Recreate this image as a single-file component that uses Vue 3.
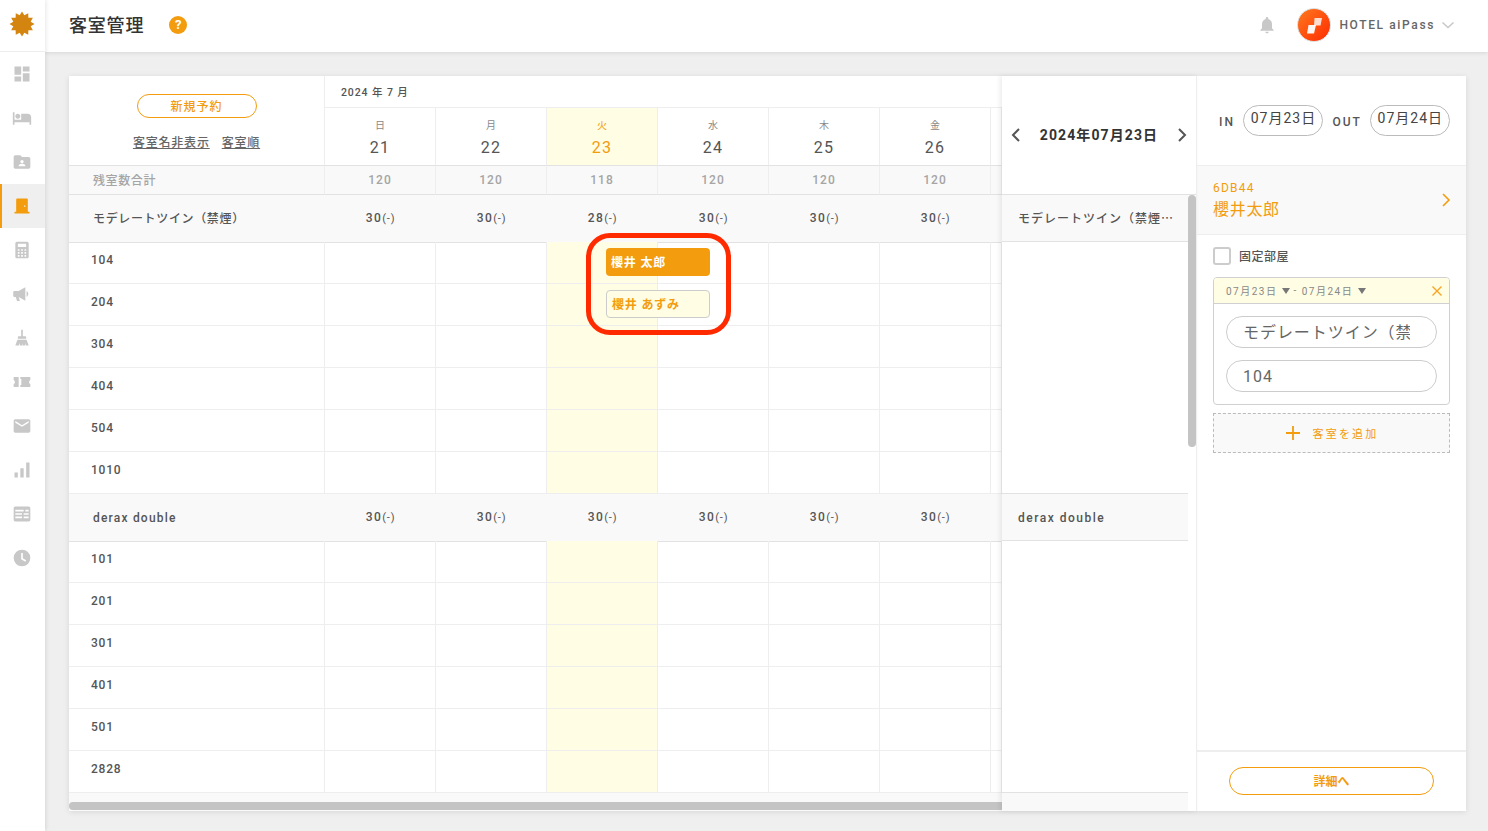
<script setup>
const days = [
  { w: '日', d: 21, rest: 120, a: 30, b: 30 },
  { w: '月', d: 22, rest: 120, a: 30, b: 30 },
  { w: '火', d: 23, rest: 118, a: 28, b: 30, today: true },
  { w: '水', d: 24, rest: 120, a: 30, b: 30 },
  { w: '木', d: 25, rest: 120, a: 30, b: 30 },
  { w: '金', d: 26, rest: 120, a: 30, b: 30 },
]
const groupA = ['104', '204', '304', '404', '504', '1010']
const groupB = ['101', '201', '301', '401', '501', '2828']

const star = (() => {
  const pts = []
  const n = 12
  for (let i = 0; i < n * 2; i++) {
    const r = i % 2 ? 9 : 12.5
    const a = (Math.PI * i) / n - Math.PI / 2
    pts.push(`${(13 + r * Math.cos(a)).toFixed(2)},${(13 + r * Math.sin(a)).toFixed(2)}`)
  }
  return pts.join(' ')
})()

const nav = [
  { key: 'dash' }, { key: 'bed' }, { key: 'folder' }, { key: 'door', active: true },
  { key: 'calc' }, { key: 'mega' }, { key: 'broom' }, { key: 'ticket' },
  { key: 'mail' }, { key: 'bars' }, { key: 'news' }, { key: 'clock' },
]
</script>

<template>
  <div class="app">
    <aside class="side">
      <div class="logo">
        <svg width="26" height="26" viewBox="0 0 26 26"><polygon :points="star" fill="#d4850f" /></svg>
      </div>
      <div v-for="n in nav" :key="n.key" class="nav" :class="{ active: n.active }">
        <svg width="20" height="20" viewBox="0 0 24 24" :fill="n.active ? '#f29c0e' : '#c8c8c8'">
          <path v-if="n.key === 'dash'" d="M3 13h8V3H3v10zm0 8h8v-6H3v6zm10 0h8V11h-8v10zm0-18v6h8V3h-8z" />
          <path v-else-if="n.key === 'bed'" d="M7 13c1.660 0 3-1.340 3-3S8.660 7 7 7s-3 1.340-3 3 1.340 3 3 3zm12-6h-8v7H3V5H1v15h2v-3h18v3h2v-9c0-2.210-1.790-4-4-4z" />
          <template v-else-if="n.key === 'folder'">
            <path d="M20 6h-8l-2-2H4c-1.100 0-1.990.9-1.990 2L2 18c0 1.100.9 2 2 2h16c1.100 0 2-.9 2-2V8c0-1.100-.9-2-2-2z" />
            <circle cx="12" cy="11.500" r="2" fill="#fff" />
            <path d="M8 17v-.8c0-1.300 2.700-2 4-2s4 .7 4 2v.8z" fill="#fff" />
          </template>
          <path v-else-if="n.key === 'door'" fill-rule="evenodd" d="M19 19V4.500c0-.8-.7-1.500-1.500-1.500h-11C5.700 3 5 3.700 5 4.500V19H3v2h18v-2h-2zM16 13h-1.500v-1.500H16z" />
          <path v-else-if="n.key === 'calc'" fill-rule="evenodd" d="M6 2h12c1.100 0 2 .9 2 2v16c0 1.100-.9 2-2 2H6c-1.100 0-2-.9-2-2V4c0-1.100.9-2 2-2zm1 2.500v4h10v-4zM7 11v2h2v-2zm4 0v2h2v-2zm4 0v2h2v-2zm-8 3.500v2h2v-2zm4 0v2h2v-2zm4 0v2h2v-2zM7 18v2h2v-2zm4 0v2h2v-2zm4 0v2h2v-2z" />
          <path v-else-if="n.key === 'mega'" d="M1.500 9.500c0-.5.5-1 1-1H8L16 4v16l-8-4.500 1.500 5H6l-1.500-5h-2c-.5 0-1-.5-1-1zM17.500 8.500c1.500 1 2 2.200 2 3.500s-.5 2.500-2 3.500z" />
          <path v-else-if="n.key === 'broom'" d="M11 2h2v8h3c.6 0 1 .4 1 1v2H7v-2c0-.6.4-1 1-1h3zM6.500 14h11L20 21h-3.500l-.7-3-.3 3h-2.700l-.3-3-.3 3H9.500L9 18l-.7 3H4z" />
          <path v-else-if="n.key === 'ticket'" d="M2 6h6v12H2v-3.500c1-.5 1.500-1.500 1.500-2.500S3 10 2 9.500zM10 6h12v3.500c-1 .5-1.500 1.500-1.500 2.500s.5 2 1.500 2.500V18H10v-2.500h1.200v-7H10z" />
          <path v-else-if="n.key === 'mail'" d="M20 4H4c-1.100 0-1.990.9-1.990 2L2 18c0 1.100.9 2 2 2h16c1.100 0 2-.9 2-2V6c0-1.100-.9-2-2-2zm0 4l-8 5-8-5V6l8 5 8-5v2z" />
          <path v-else-if="n.key === 'bars'" d="M3 15h4v6H3zm7-5h4v11h-4zm7-7h4v18h-4z" />
          <path v-else-if="n.key === 'news'" fill-rule="evenodd" d="M4 3h16c1.100 0 2 .9 2 2v14c0 1.100-.9 2-2 2H4c-1.100 0-2-.9-2-2V5c0-1.100.9-2 2-2zm0 4v2h10V7zm0 4v2h8v-2zm10 0v2h6v-2zm-10 4v2h8v-2zm10 0v2h6v-2zm2-8v2h4V7z" />
          <path v-else-if="n.key === 'clock'" d="M12 2a10 10 0 1 0 0 20 10 10 0 0 0 0-20zm4 14.500-5-3V6h2v6.400l4 2.400z" />
        </svg>
      </div>
    </aside>

    <div class="main">
      <header class="top">
        <h1 class="title">客室管理</h1>
        <span class="help">?</span>
        <div class="top-right">
          <svg class="bell" width="20" height="20" viewBox="0 0 24 24" fill="#c8c8c8"><path d="M12 22c1.100 0 2-.9 2-2h-4c0 1.100.9 2 2 2zm6-6v-5c0-3.100-1.600-5.600-4.500-6.300V4c0-.8-.7-1.500-1.500-1.500s-1.500.7-1.500 1.500v.7C7.600 5.400 6 7.900 6 11v5l-2 2v1h16v-1l-2-2z" /></svg>
          <div class="avatar">
            <svg width="20" height="20" viewBox="0 0 20 20" fill="#fff">
              <path d="M10.500 3h7.500L16.500 10.500H10z" opacity=".8" />
              <path d="M4.500 10h7.500L10 18.500H3z" opacity=".95" />
            </svg>
          </div>
          <span class="hotel">HOTEL aiPass</span>
          <svg width="14" height="14" viewBox="0 0 14 14" fill="none" stroke="#c8c8c8" stroke-width="1.500"><path d="M1.500 4.500 7 9.500l5.500-5" /></svg>
        </div>
      </header>

      <div class="content">
        <div class="card">
          <section class="cal">
            <div class="head grid">
              <div class="corner">
                <button class="btn-new">新規予約</button>
                <div class="links"><a>客室名非表示</a><a>客室順</a></div>
              </div>
              <div class="month">2024 年 7 月</div>
              <div v-for="d in days" :key="d.d" class="dayhead" :class="{ today: d.today }">
                <span class="wd">{{ d.w }}</span>
                <span class="dn">{{ d.d }}</span>
              </div>
              <div class="dayhead"></div>
            </div>

            <div class="grid rest">
              <div class="rest-l">残室数合計</div>
              <div v-for="d in days" :key="d.d" class="rest-c">{{ d.rest }}</div>
              <div class="rest-c"></div>
            </div>

            <div class="grid type">
              <div class="type-l jp">モデレートツイン（禁煙）</div>
              <div v-for="d in days" :key="d.d" class="type-c">{{ d.a }}<small>(-)</small></div>
              <div class="type-c"></div>
            </div>
            <div v-for="(r, i) in groupA" :key="r" class="grid room">
              <div class="room-l">{{ r }}</div>
              <div v-for="d in days" :key="d.d" class="cell" :class="{ today: d.today }">
                <template v-if="d.today && i === 0">
                  <div class="book solid">櫻井 太郎</div>
                  <div class="book pale">櫻井 あずみ</div>
                  <div class="mark"></div>
                </template>
              </div>
              <div class="cell"></div>
            </div>

            <div class="grid type">
              <div class="type-l">derax double</div>
              <div v-for="d in days" :key="d.d" class="type-c">{{ d.b }}<small>(-)</small></div>
              <div class="type-c"></div>
            </div>
            <div v-for="r in groupB" :key="r" class="grid room">
              <div class="room-l">{{ r }}</div>
              <div v-for="d in days" :key="d.d" class="cell" :class="{ today: d.today }"></div>
              <div class="cell"></div>
            </div>

            <div class="cal-foot"><div class="hbar"></div></div>
          </section>

          <section class="daypanel">
            <div class="dp-head">
              <svg width="12" height="16" viewBox="0 0 12 16" fill="none" stroke="#555" stroke-width="2"><path d="M9 2 3 8l6 6" /></svg>
              <span class="dp-date">2024年07月23日</span>
              <svg width="12" height="16" viewBox="0 0 12 16" fill="none" stroke="#555" stroke-width="2"><path d="m3 2 6 6-6 6" /></svg>
            </div>
            <div class="dp-body">
              <div class="dp-scroll">
                <div class="dp-type"><span class="cjk">モデレートツイン（禁煙）</span></div>
                <div class="dp-gap"></div>
                <div class="dp-type"><span>derax double</span></div>
                <div class="dp-gap"></div>
                <div class="dp-foot"></div>
              </div>
              <div class="vbar"><div class="thumb"></div></div>
            </div>
          </section>

          <section class="detail">
            <div class="dates">
              <span class="lbl">IN</span>
              <span class="date-pill">07月23日</span>
              <span class="lbl">OUT</span>
              <span class="date-pill">07月24日</span>
            </div>
            <div class="guest">
              <div class="who">
                <div class="code">6DB44</div>
                <div class="gname">櫻井太郎</div>
              </div>
              <svg width="12" height="16" viewBox="0 0 12 16" fill="none" stroke="#f29c0e" stroke-width="1.600"><path d="m3 2 6 6-6 6" /></svg>
            </div>
            <div class="form">
              <label class="check"><span class="box"></span><span class="check-t">固定部屋</span></label>
              <div class="stay">
                <div class="stay-h">
                  <span class="sd">07月23日</span><i class="tri"></i><span class="sd dash">-</span><span class="sd">07月24日</span><i class="tri"></i>
                  <svg class="x" width="12" height="12" viewBox="0 0 12 12" fill="none" stroke="#f5a623" stroke-width="1.400"><path d="m1.500 1.500 9 9m0-9-9 9" /></svg>
                </div>
                <div class="stay-b">
                  <input class="field first" readonly value="モデレートツイン（禁煙）" />
                  <input class="field" readonly value="104" />
                </div>
              </div>
              <div class="add">
                <svg width="16" height="16" viewBox="0 0 16 16" fill="none" stroke="#f29c0e" stroke-width="1.800"><path d="M8 1v14M1 8h14" /></svg>
                <span>客室を追加</span>
              </div>
            </div>
            <div class="det-foot"><button class="btn-detail">詳細へ</button></div>
          </section>
        </div>
      </div>
    </div>
  </div>
</template>

<style>
html, body { margin: 0; background: #efefef; }
</style>

<style scoped>
.app {
  display: flex;
  width: 1488px;
  height: 831px;
  overflow: hidden;
  background: #efefef;
  font-family: Roboto, "Noto Sans CJK JP", sans-serif;
  color: #555;
}
.side {
  width: 45px;
  flex: none;
  background: #fff;
  box-shadow: 1px 0 4px rgba(0, 0, 0, .1);
  z-index: 3;
}
.logo {
  border-bottom: 1px solid #eee;
  display: flex;
  align-items: center;
  justify-content: center;
  padding: 0 1px 3px 0;
  height: 48px;
}
.nav {
  height: 44px;
  display: flex;
  align-items: center;
  justify-content: center;
  padding-right: 1px;
}
.nav.active {
  background: #efefef;
  border-left: 2px solid #f29c0e;
  padding-right: 3px;
}
.main { flex: 1; min-width: 0; display: flex; flex-direction: column; }
.top {
  height: 50px;
  flex: none;
  background: #fff;
  display: flex;
  align-items: center;
  padding: 0 0 2px 24px;
  box-shadow: 0 1px 4px rgba(0, 0, 0, .1);
  z-index: 2;
}
.title {
  margin: 0;
  padding-top: 2px;
  font-size: 18px;
  line-height: 26px;
  font-weight: 500;
  letter-spacing: .8px;
  color: #333;
}
.help {
  width: 18px;
  height: 18px;
  margin-left: 25px;
  border-radius: 50%;
  background: #f29c0e;
  color: #fff;
  font-size: 13px;
  line-height: 18px;
  font-weight: 700;
  text-align: center;
}
.top-right {
  margin-left: auto;
  display: flex;
  align-items: center;
  padding-right: 33px;
}
.bell { margin-right: 20px; }
.avatar {
  width: 34px;
  height: 34px;
  box-sizing: border-box;
  border-radius: 50%;
  border: 1px solid #ddd;
  background: linear-gradient(135deg, #ff7a1f, #ff2a00);
  display: flex;
  align-items: center;
  justify-content: center;
}
.hotel {
  margin: 0 6px 0 8px;
  font-size: 12px;
  font-weight: 500;
  letter-spacing: 1.630px;
  color: #666;
}
.content { flex: 1; padding: 24px 22px 20px 24px; min-height: 0; }
.card {
  height: 735px;
  display: flex;
  background: #fff;
  box-shadow: 0 1px 6px rgba(0, 0, 0, .1);
}

/* calendar */
.cal { width: 933px; flex: none; display: flex; flex-direction: column; }
.grid {
  display: grid;
  grid-template-columns: 256px repeat(6, 111px) 11px;
}
.corner {
  grid-row: 1 / span 2;
  border-right: 1px solid #eee;
  border-bottom: 1px solid #e2e2e2;
  display: flex;
  flex-direction: column;
  align-items: center;
  padding-top: 18px;
  box-sizing: border-box;
}
.btn-new {
  width: 120px;
  height: 24px;
  padding: 1px 0 0;
  border: 1px solid #f29c0e;
  border-radius: 12px;
  background: #fff;
  color: #f29c0e;
  font: 500 12px/20px Roboto, "Noto Sans CJK JP", sans-serif;
  letter-spacing: 1px;
}
.links {
  display: flex;
  gap: 12px;
  margin-top: 16px;
  font-size: 12px;
  line-height: 18px;
  font-weight: 500;
  color: #666;
  letter-spacing: .8px;
}
.links a { text-decoration: underline; }
.month {
  grid-column: 2 / -1;
  height: 29px;
  padding: 2px 0 0 16px;
  border-bottom: 1px solid #eee;
  font-size: 10.500px;
  line-height: 29px;
  font-weight: 500;
  letter-spacing: .9px;
  color: #555;
}
.dayhead {
  border-right: 1px solid #eee;
  border-bottom: 1px solid #e2e2e2;
  display: flex;
  flex-direction: column;
  align-items: center;
  padding-top: 10px;
  height: 47px;
}
.dayhead.today { background: #fffde3; color: #f29c0e; }
.wd { font-size: 10px; line-height: 15px; color: #888; }
.dn { font-size: 16px; line-height: 24px; letter-spacing: 1.300px; margin-top: 3px; }
.today .wd { color: #f29c0e; }
.rest { height: 29px; background: #f9f9f9; }
.rest > div {
  border-bottom: 1px solid #e2e2e2;
  border-right: 1px solid #eee;
  font-size: 12px;
  line-height: 28px;
  font-weight: 500;
  color: #a5a5a5;
  letter-spacing: 1px;
}
.rest > .rest-l { padding: 2px 0 0 24px; line-height: 26px; letter-spacing: .6px; }
.rest-c { text-align: center; }
.type { height: 47px; background: #f9f9f9; }
.type > div {
  border-bottom: 1px solid #e2e2e2;
  font-size: 12px;
  line-height: 46px;
  font-weight: 500;
  letter-spacing: 1.200px;
  color: #555;
}
.type > .type-l { padding-top: 2px; line-height: 44px; }
.type > .jp { letter-spacing: .65px; }
.type-l { padding-left: 24px; }
.type > .type-c { text-align: center; letter-spacing: 1.500px; }
.type-c small { font-size: 11px; font-weight: 400; letter-spacing: .8px; }
.room { height: 42px; }
.room > div { border-bottom: 1px solid #eee; }
.room-l {
  border-right: 1px solid #eee;
  padding-left: 22px;
  font-size: 12px;
  line-height: 37px;
  font-weight: 500;
  letter-spacing: .8px;
  color: #555;
}
.cell { border-right: 1px solid #eee; position: relative; }
.cell.today { background: #fffde3; }
.book {
  position: absolute;
  left: 59px;
  width: 104px;
  height: 28px;
  box-sizing: border-box;
  padding-left: 5px;
  border-radius: 4px;
  font-size: 12px;
  line-height: 30px;
  font-weight: 700;
  letter-spacing: .8px;
  white-space: nowrap;
  z-index: 2;
}
.book.solid { top: 6px; background: #f29c0e; color: #fff; }
.book.pale {
  top: 48px;
  background: #fffde3;
  border: 1px solid #ccc;
  color: #f29c0e;
  line-height: 28px;
}
.mark {
  position: absolute;
  left: 39px;
  top: -9px;
  width: 145px;
  height: 102px;
  box-sizing: border-box;
  border: 5px solid #ff2a00;
  border-radius: 24px;
  z-index: 3;
}
.cal-foot { flex: 1; background: #f9f9f9; padding-top: 9px; }
.hbar { height: 8px; background: #c4c4c4; border-radius: 4px 0 0 4px; }

/* day panel */
.daypanel {
  width: 195px;
  flex: none;
  display: flex;
  flex-direction: column;
  border-right: 1px solid #eee;
  box-sizing: border-box;
  background: #fff;
  box-shadow: -2px 0 5px rgba(0, 0, 0, .08);
  z-index: 1;
}
.dp-head {
  height: 118px;
  flex: none;
  border-bottom: 1px solid #e2e2e2;
  display: flex;
  align-items: center;
  gap: 16px;
  padding: 0 8px;
}
.dp-date {
  flex: 1;
  margin-bottom: 3px;
  font-size: 14px;
  font-weight: 700;
  letter-spacing: 1.100px;
  color: #333;
  white-space: nowrap;
  text-align: center;
}
.dp-body { flex: 1; display: flex; min-height: 0; }
.dp-scroll { flex: 1; min-width: 0; display: flex; flex-direction: column; }
.dp-type {
  height: 46px;
  flex: none;
  background: #f9f9f9;
  border-bottom: 1px solid #e2e2e2;
  padding-left: 16px;
  font-size: 12px;
  font-weight: 500;
  color: #555;
}
.dp-type span {
  display: block;
  padding-top: 2px;
  line-height: 44px;
  letter-spacing: 1.500px;
  white-space: nowrap;
}
.dp-type .cjk {
  padding-top: 0;
  line-height: 46px;
  font-family: "Noto Sans CJK JP", sans-serif;
  letter-spacing: 1px;
  max-width: 155.500px;
  overflow: hidden;
  text-overflow: ellipsis;
}
.dp-gap { height: 252px; flex: none; border-bottom: 1px solid #e2e2e2; box-sizing: border-box; }
.dp-foot { flex: 1; background: #f9f9f9; }
.vbar { width: 8px; flex: none; }
.thumb { height: 252px; background: #c4c4c4; border-radius: 4px; }

/* detail */
.detail { width: 269px; flex: none; display: flex; flex-direction: column; }
.dates {
  height: 89px;
  flex: none;
  border-bottom: 1px solid #eee;
  display: flex;
  align-items: center;
  padding: 0 16px 0 22px;
}
.lbl {
  font-size: 12px;
  font-weight: 500;
  letter-spacing: 2px;
  color: #555;
  margin: 2px 8.500px 0 0;
}
.date-pill {
  width: 80px;
  height: 31px;
  flex: none;
  box-sizing: border-box;
  margin-top: -1px;
  margin-right: 9px;
  border: 1px solid #bbb;
  border-radius: 16px;
  font-size: 14px;
  line-height: 24px;
  text-align: center;
  letter-spacing: 1px;
  color: #444;
  white-space: nowrap;
}
.guest {
  height: 68px;
  flex: none;
  background: #f9f9f9;
  border-bottom: 1px solid #eee;
  display: flex;
  align-items: center;
  justify-content: space-between;
  padding: 0 14px 0 16px;
}
.who { padding-top: 2px; }
.code { font-size: 12px; line-height: 16px; letter-spacing: 1.200px; color: #f29c0e; }
.gname { margin-top: 2px; font-size: 16px; line-height: 24px; letter-spacing: .7px; color: #f29c0e; }
.form { padding: 11px 16px 0; }
.check {
  display: flex;
  align-items: center;
  gap: 8px;
  height: 20px;
  font-size: 12px;
  font-weight: 500;
  letter-spacing: .5px;
  color: #555;
}
.check-t { margin-top: -2px; }
.box {
  width: 18px;
  height: 18px;
  box-sizing: border-box;
  border: 2px solid #ccc;
  border-radius: 3px;
}
.stay {
  margin-top: 11px;
  border: 1px solid #d0d0d0;
  border-radius: 4px;
  overflow: hidden;
}
.stay-h {
  height: 25px;
  background: #fffde3;
  border-bottom: 1px solid #d0d0d0;
  display: flex;
  align-items: center;
  padding: 0 6px 0 12px;
}
.sd { font-size: 10px; letter-spacing: 1.500px; color: #888; white-space: nowrap; }
.dash { margin: 0 4px 0 3px; }
.tri {
  width: 0;
  height: 0;
  margin-left: 5px;
  border-left: 4px solid transparent;
  border-right: 4px solid transparent;
  border-top: 6px solid #777;
}
.x { margin-left: auto; }
.stay-b { padding: 12px; display: flex; flex-direction: column; gap: 12px; }
.field {
  display: block;
  width: 100%;
  height: 32px;
  box-sizing: border-box;
  margin: 0;
  border: 1px solid #ccc;
  border-radius: 16px;
  padding: 0 26px 0 16px;
  outline: none;
  background: #fff;
  font: 400 16px/28px Roboto, "Noto Sans CJK JP", sans-serif;
  letter-spacing: .95px;
  color: #666;
}
.field.first { padding-bottom: 3px; }
.add {
  margin-top: 8px;
  height: 40px;
  box-sizing: border-box;
  border: 1px dashed #bbb;
  background: #f9f9f9;
  display: flex;
  align-items: center;
  justify-content: center;
  gap: 12px;
  font-size: 11px;
  letter-spacing: 2.200px;
  color: #f29c0e;
}
.det-foot {
  margin-top: auto;
  border-top: 2px solid #eee;
  display: flex;
  justify-content: center;
  padding-top: 15px;
  height: 44px;
}
.btn-detail {
  width: 205px;
  height: 28px;
  padding: 2px 0 0;
  background: #fff;
  border: 1px solid #f29c0e;
  border-radius: 14px;
  color: #f29c0e;
  font: 700 12px/20px Roboto, "Noto Sans CJK JP", sans-serif;
}
</style>
